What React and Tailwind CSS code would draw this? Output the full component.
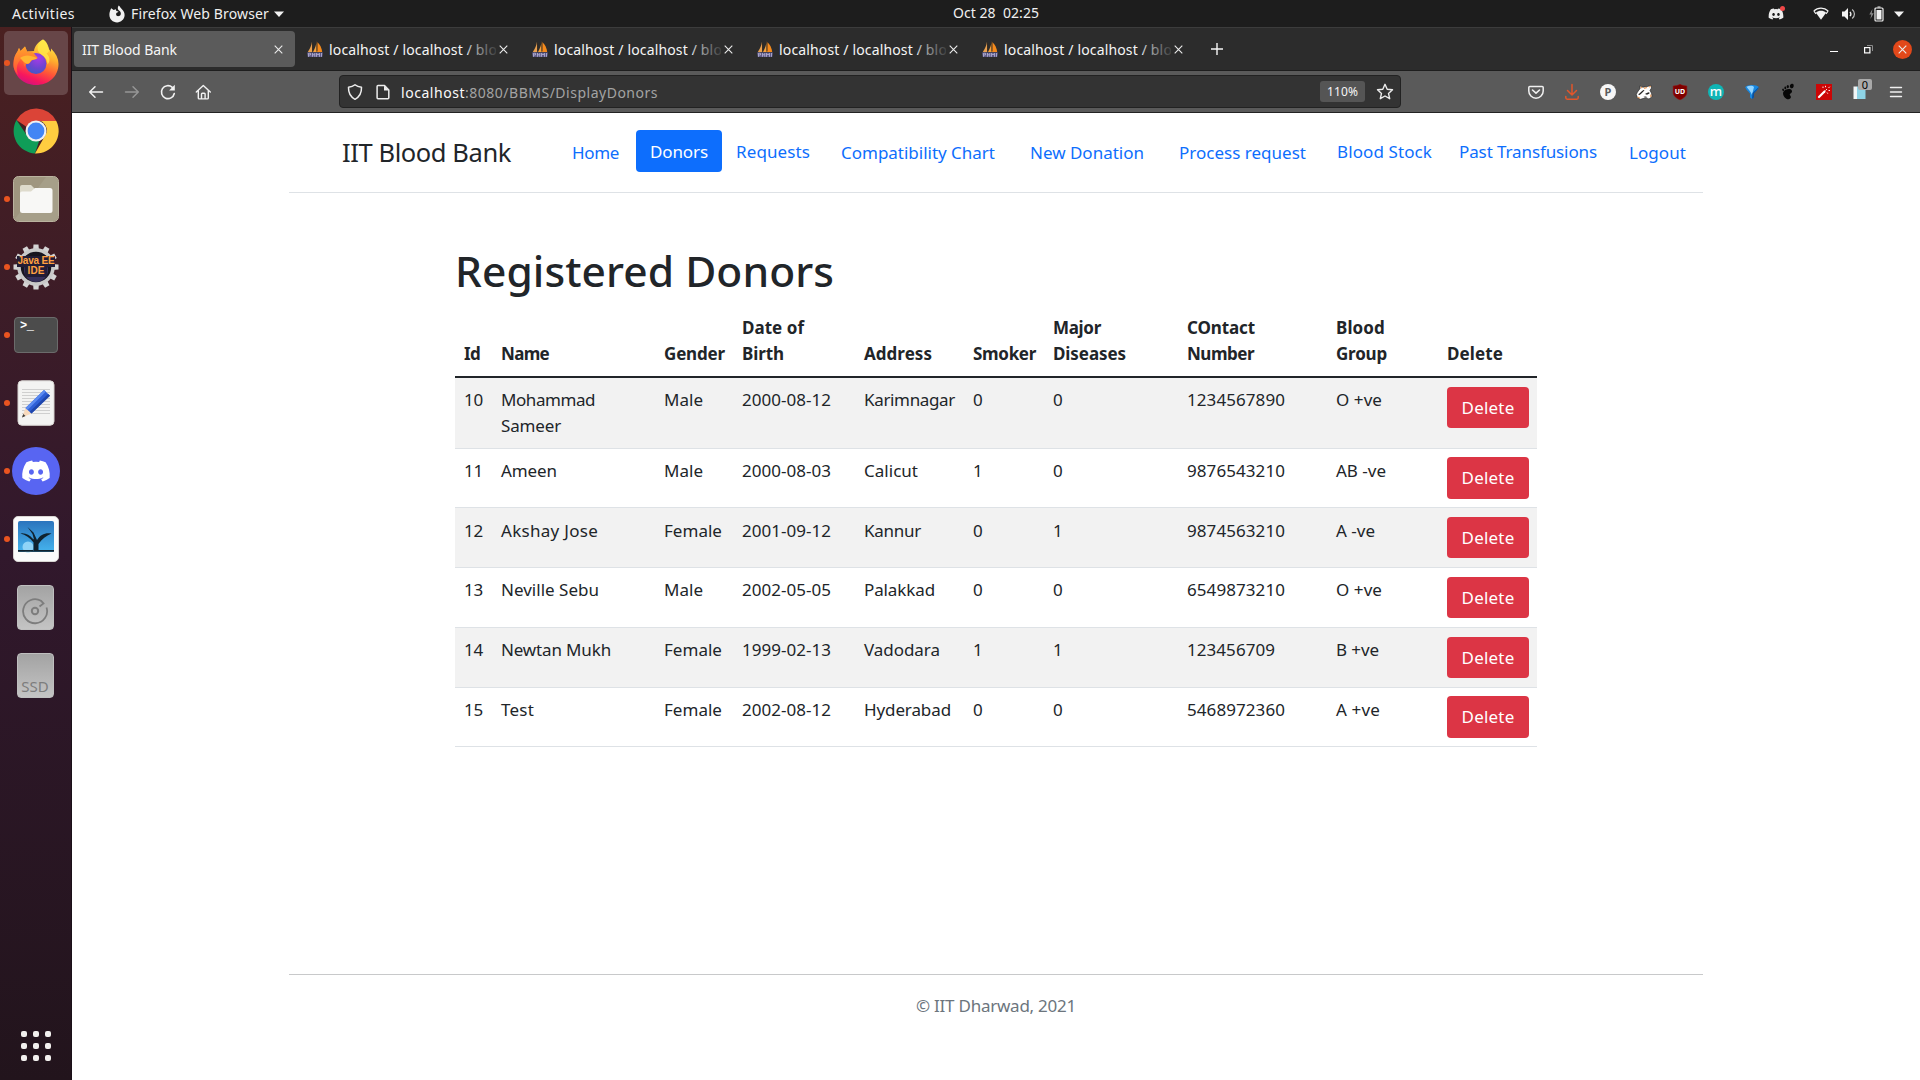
import { useLayoutEffect, useRef } from "react";
import { FaDiscord } from "react-icons/fa";

/* One line of text whose tracking is adjusted so that it fills `w` pixels. */
function Label({ w, className = "", children }) {
  const outer = useRef(null);
  const inner = useRef(null);
  useLayoutEffect(() => {
    const natural = inner.current.getBoundingClientRect().width;
    const count = inner.current.textContent.length;
    outer.current.style.width = `${w}px`;
    inner.current.style.letterSpacing = `${(w - natural) / count}px`;
  }, [w]);
  return (
    <span ref={outer} className={`block shrink-0 whitespace-pre ${className}`}>
      <span ref={inner}>{children}</span>
    </span>
  );
}

/* ---------- top bar ---------- */

function TopBar() {
  return (
    <div className="flex h-[27px] shrink-0 items-center bg-[#1d1d1d] text-[14px] leading-[26px] text-[#f0f0f0]">
      <div className="flex w-[953px] items-center pl-3">
        <Label w={63}>Activities</Label>
        <svg className="ml-[34px] h-[18px] w-4" viewBox="0 0 16 18">
          <path fill="#f2f2f2" fillRule="evenodd" d="M2.2 3.2 4.6 5 7 4.300C6.600 6 8 6.400 9.600 6.600 9 7.500 7.600 7.600 7.200 8.500 6.500 10.200 8.300 11.600 10 11.100 12.500 10.400 12.300 7 10.300 5.700 8.500 4.600 8.300 2.200 9.700.4 11.200 1.300 11.300 2.700 12.700 4 14.700 5.800 15.800 8 15.600 10.600 15.200 14.600 12 17.300 8.100 17.400 3.800 17.400.5 14.200.4 10 .3 7.200 1.200 5.400 2.200 3.200Z" />
        </svg>
        <Label w={138} className="ml-[6px]">Firefox Web Browser</Label>
        <svg className="ml-[5px] h-[6px] w-[10px]" viewBox="0 0 10 6"><path fill="#f2f2f2" d="M0 .5h10L5 6Z" /></svg>
      </div>
      <Label w={86} className="-mt-px">{"Oct 28  02:25"}</Label>
      <div className="flex flex-1 items-center justify-end pr-4">
        <div className="relative mr-[29px] h-4 w-4">
          <FaDiscord className="h-4 w-4 text-[#eeeeee]" />
          <span className="absolute -right-px top-0 h-[5px] w-[5px] rounded-full bg-[#f04747]" />
        </div>
        <svg className="h-[13px] w-4" viewBox="0 0 16 13">
          <path fill="#f2f2f2" d="M8 12.800 2.900 5.800C5.700 3.200 10.300 3.200 13.100 5.800Z" />
          <path fill="none" stroke="#f2f2f2" strokeWidth="1.200" d="M.8 4C4.800.1 11.200.1 15.200 4M3 6.800.8 4M13 6.800 15.200 4" />
        </svg>
        <svg className="ml-3 h-[14px] w-4" viewBox="0 0 16 14">
          <path fill="#f2f2f2" d="M1 4.500h2.500L7 1v12L3.500 9.500H1Z" />
          <path fill="none" stroke="#f2f2f2" strokeWidth="1.300" d="M9 4.800C10 6 10 8 9 9.200" />
          <path fill="none" stroke="#bdbdbd" strokeWidth="1.200" d="M11.200 2.500c3 2.500 3 6.500 0 9" />
        </svg>
        <svg className="ml-[12px] h-4 w-[15px]" viewBox="0 0 15 16">
          <path fill="#8a8a8a" d="M3.500 3 .3 8.600h2L1.400 13l3.300-5.700H2.700Z" />
          <path fill="#f2f2f2" d="M8.500.5h3v1h-3ZM7.500 4h5v9.500h-5Z" />
          <rect x="6" y="2" width="8" height="13" rx="1" fill="none" stroke="#f2f2f2" strokeWidth="1.200" />
        </svg>
        <svg className="ml-[10px] h-[6px] w-[10px]" viewBox="0 0 10 6"><path fill="#f2f2f2" d="M0 .5h10L5 6Z" /></svg>
      </div>
    </div>
  );
}

/* ---------- dock ---------- */

function FirefoxIcon() {
  return (
    <svg className="h-[46px] w-[46px] -translate-y-px" viewBox="0 0 46 46">
      <defs>
        <linearGradient id="ffBody" x1=".75" y1="0" x2=".35" y2="1">
          <stop offset="0" stopColor="#fff04a" />
          <stop offset=".35" stopColor="#ffb02e" />
          <stop offset=".62" stopColor="#ff5a36" />
          <stop offset=".85" stopColor="#f8175d" />
          <stop offset="1" stopColor="#d3127f" />
        </linearGradient>
        <linearGradient id="ffEar" x1="0" y1="0" x2="0" y2="1">
          <stop offset="0" stopColor="#ffa42a" />
          <stop offset="1" stopColor="#ff4a3a" />
        </linearGradient>
        <radialGradient id="ffGlobe" cx=".6" cy=".25" r=".8">
          <stop offset="0" stopColor="#a63be8" />
          <stop offset=".6" stopColor="#6b45d0" />
          <stop offset="1" stopColor="#3e5bc4" />
        </radialGradient>
      </defs>
      <path fill="url(#ffBody)" d="M30 .5c3.500 2 4.500 5.500 5.500 9.500 1 .8 1.800 1.800 2.500 3V9.500c5 5 7.500 10 7.500 15.500C45.500 37.500 35.500 46 23 46S.5 37 .5 24.500C.5 19 2.500 15 4.500 12.500L6 9l1.500 3L12 7.500l2 5 7-.5c.5-4.500 4-9 9-11.500Z" />
      <circle cx="23" cy="24.500" r="10.500" fill="url(#ffGlobe)" />
      <path fill="url(#ffEar)" d="M6 9l1.500 3L12 7.500l2.300 5.200c2.700-.4 5 .3 6.700 1.800 1.500 2.500 4 3.500 3.500 4.500-.5 1.500-5.500 1.500-6.500 3-1 1.200-.7 2.400-2.700 2.700-1.800.2-3 .3-3.300 3.300-2-2.500-2.200-6.500-.5-9.500-2 0-4 1.500-5.500 4-2.500 3.500-3 9-.5 14C.5 31 .3 27.500.5 24.500.6 19 2.500 15 4.500 12.500Z" />
      <path fill="#ffb632" d="M7 19c4-3.500 10-3.500 17 0-.5 1.500-5 1.500-6.300 3-1 1.300-.9 2.500-3.200 2.700C11 24.500 9.500 21 7 19Z" />
      <path fill="#ffe94a" fillOpacity=".8" d="M30 .5c-6 4-7 10.500-3 14 4 3 7.500 5 7.500 11 3-3 2.500-8-1-11C36 13 37 11 35.500 8 34.500 5 33 2 30 .5Z" />
    </svg>
  );
}

function ChromeIcon() {
  return (
    <svg className="h-[46px] w-[46px]" viewBox="0 0 46 46">
      <path fill="#db4437" d="M3.500 12A22.500 22.500 0 0 1 43.300 13H23a10 10 0 0 0-9.300 6Z" />
      <path fill="#0f9d58" d="M3.500 12 14.300 28a10 10 0 0 0 12 4.500L22 45.500A22.500 22.500 0 0 1 3.500 12Z" />
      <path fill="#ffcd40" d="M43.300 13A22.500 22.500 0 0 1 22 45.500l9.600-17A10 10 0 0 0 27.500 13Z" />
      <circle cx="23" cy="23" r="10.500" fill="#f1f1f1" />
      <circle cx="23" cy="23" r="8.400" fill="#4285f4" />
    </svg>
  );
}

function FilesIcon() {
  return (
    <svg className="h-[46px] w-[46px]" viewBox="0 0 46 46">
      <rect x=".5" y=".5" width="45" height="45" rx="5" fill="#9f967f" stroke="#bab39f" />
      <path fill="#a69f89" d="M33 1h7a5 5 0 0 1 5 5v34a5 5 0 0 1-5 5H6a5 5 0 0 1-4-2Z" />
      <path fill="#dedbcc" d="M7 11a2 2 0 0 1 2-2h9l4 4h15v8H7Z" />
      <path fill="#f8f8f6" d="M7 17.500a2 2 0 0 1 2-2h9l4-3.500h15a2.500 2.500 0 0 1 2.500 2.500v20A2.500 2.500 0 0 1 37 37H9.500A2.500 2.500 0 0 1 7 34.500Z" />
    </svg>
  );
}

const TEETH = [0, 30, 60, 90, 120, 150, 180, 210, 240, 270, 300, 330];

function EclipseIcon() {
  return (
    <div className="relative h-[46px] w-[46px]">
      <svg className="h-[46px] w-[46px]" viewBox="0 0 46 46">
        {TEETH.map((a) => (
          <path key={a} transform={`rotate(${a} 23 23)`} fill="#d4d4d4" d="M20 7 20.500 .5h5L26 7Z" />
        ))}
        <circle cx="23" cy="23" r="17" fill="#17151f" stroke="#c9c9c9" strokeWidth="3.500" />
        <circle cx="23" cy="26" r="12" fill="#37305a" />
        <path fill="#221d36" d="M4 12h38v11H4ZM12 23h22v10H12Z" />
      </svg>
      <div className="absolute inset-0 flex flex-col items-center pt-[12px] font-['Liberation_Sans'] text-[10px] leading-[10px] font-bold text-[#ffa040]">
        <Label w={37}>Java EE</Label>
        <Label w={17}>IDE</Label>
      </div>
    </div>
  );
}

function TerminalIcon() {
  return (
    <div className="h-[36px] w-[44px] rounded-[4px] border border-[#6b6b6b] bg-[#4c4c4c] pl-[5px] pt-[2px] font-['Liberation_Mono'] text-[12px] leading-[13px] font-bold tracking-[-0.500px] text-white">
      &gt;_
    </div>
  );
}

function EditorIcon() {
  return (
    <svg className="h-[46px] w-[38px]" viewBox="0 0 38 46">
      <rect x="1" y=".8" width="36" height="44.500" rx="4" fill="#f3f3f2" stroke="#d6d3d0" />
      <path stroke="#cfcfcf" d="M5 9.500h28M5 12.500h28M5 15.500h28M5 18.500h28M5 21.500h28M5 24.500h28M5 27.500h28M5 30.500h28M5 33.500h28" />
      <path fill="#f7d9bd" d="m5 37.500 3.500-9.500 6 5.500Z" />
      <path fill="#3b3b3b" d="m5 37.500 1.200-3.600 2.300 2.100Z" />
      <path fill="#2f5fd6" d="M8.500 28 27 10l6 5.800-18.500 17.700Z" />
      <path fill="#5b8af0" d="M8.500 28 27 10l1.800 1.800L10.500 30Z" />
      <path fill="#1f46ac" d="m12.700 31.800 18.400-17.800 1.900 1.800-18.500 17.700Z" />
    </svg>
  );
}

function DiscordIcon() {
  return (
    <div className="flex h-12 w-12 items-center justify-center rounded-full bg-[#5865f2]">
      <FaDiscord className="h-[30px] w-[30px] text-white" />
    </div>
  );
}

function PhotoIcon() {
  return (
    <svg className="h-[46px] w-[46px]" viewBox="0 0 46 46">
      <defs>
        <linearGradient id="sky" x1="0" y1="0" x2="0" y2="1">
          <stop offset="0" stopColor="#2b74bd" />
          <stop offset="1" stopColor="#45b4ee" />
        </linearGradient>
      </defs>
      <rect x=".5" y=".5" width="45" height="45" rx="4.500" fill="#fbfbfb" stroke="#d8d5d2" />
      <rect x="5" y="5" width="36" height="31" rx="2" fill="url(#sky)" />
      <circle cx="15" cy="31" r="5.500" fill="#8fd4f7" />
      <path fill="#10222e" d="M20.500 35V26.500C17 22 12.500 18.500 7.500 17.500c5-.8 9 1.500 12 5l1.500 1L19.500 18l-5-7 6 5.500 3.500 7.500C27.500 18.500 32 16.500 38.500 17.500 33 20 29 23 25.500 28v6H41v1.800H5V34h15Z" />
    </svg>
  );
}

function DriveIcon({ children }) {
  return (
    <div className="flex h-[45px] w-[37px] -translate-x-px items-end justify-center rounded-[4px] border border-[#bfbfbf] bg-linear-to-b from-[#a3a3a3] to-[#c4c4c4]">
      {children}
    </div>
  );
}

const DOCK = [
  { icon: <FirefoxIcon />, active: true, running: true },
  { icon: <ChromeIcon /> },
  { icon: <FilesIcon />, running: true },
  { icon: <EclipseIcon />, running: true },
  { icon: <TerminalIcon />, running: true },
  { icon: <EditorIcon />, running: true },
  { icon: <DiscordIcon />, running: true },
  { icon: <PhotoIcon />, running: true },
  {
    icon: (
      <DriveIcon>
        <svg className="mb-1 h-7 w-7" viewBox="0 0 28 28" fill="none" stroke="#7d7d7d" strokeWidth="1.800">
          <path d="M25.500 10.500A12 12 0 1 1 20 3.800l2.500 2.700-4 3" />
          <circle cx="14" cy="14" r="3.200" strokeWidth="2" />
        </svg>
      </DriveIcon>
    ),
  },
  { icon: <DriveIcon><span className="text-[15px] leading-[22px] text-[#7d7d7d]">SSD</span></DriveIcon> },
];

function Dock() {
  return (
    <div className="flex w-[72px] shrink-0 flex-col justify-between border-r border-[#1a1018] bg-linear-to-b from-[#4a2020] via-[#31182c] to-[#22141c] pt-[4px] pb-[19px]">
      <div className="flex flex-col gap-1">
        {DOCK.map(({ icon, active, running }, i) => (
          <div key={i} className={`relative ml-1 flex h-16 w-16 items-center justify-center rounded-[5px] ${active ? "bg-[#674648]" : ""}`}>
            {running && <span className="absolute left-0 top-[29px] h-[6px] w-[6px] rounded-full bg-[#e95420]" />}
            {icon}
          </div>
        ))}
      </div>
      <div className="ml-[21px] grid w-[30px] grid-cols-3 gap-[6px]">
        {Array.from({ length: 9 }, (_, i) => (
          <span key={i} className="h-[6px] w-[6px] rounded-[2px] bg-[#f2f0ee]" />
        ))}
      </div>
    </div>
  );
}

/* ---------- browser chrome ---------- */

function Cross() {
  return (
    <svg className="h-[9px] w-[9px]" viewBox="0 0 9 9"><path stroke="#ececec" strokeWidth="1.100" d="m.7.7 7.600 7.600m0-7.600-7.600 7.600" /></svg>
  );
}

function SailsIcon() {
  return (
    <svg className="h-4 w-4" viewBox="0 0 16 16">
      <path fill="#e8a050" d="M5 .8 5.200 11H.8C3 7.500 4.500 4.500 5 .8Z" />
      <path fill="#f5a13a" d="M9.600 0v11H6C8 7 9.500 4 9.600 0Z" />
      <path fill="#f48a1c" d="M10.200 1c2.800 2.500 4.500 5.500 5 10h-5Z" />
      <path stroke="#3a2a1a" strokeWidth=".7" d="M5.600 2v8M10 1v9" />
      <path fill="#5c5885" d="M0 11.500h16l-.8 4.500H.8Z" />
      <path fill="none" stroke="#aeabcf" strokeWidth=".9" d="M1.500 15.800v-3.600h2v1.800h-2M5.500 12v3.800m0-2h2.300m0-1.800v3.800M9.500 15.800v-3.600l1.500 1.800 1.500-1.800v3.600M14.500 12v3.800" />
    </svg>
  );
}

function TabStrip() {
  return (
    <div className="flex h-[44px] shrink-0 items-start border-t border-b border-t-[#3c3c3c] border-b-[#1e1e1e] bg-[#2c2c2c] pt-[3px] pl-[2px] text-[14px] leading-[36px] text-[#f5f5f5]">
      <div className="flex gap-1">
        <div className="flex h-[36px] w-[221px] items-center justify-between rounded-[4px] bg-[#5b5b5b] pr-[12px] pl-2">
          <Label w={95} className="mt-[2px]">IIT Blood Bank</Label>
          <Cross />
        </div>
        {[0, 1, 2, 3].map((i) => (
          <div key={i} className="flex h-[36px] w-[221px] items-center pl-2">
            <SailsIcon />
            <div className="relative ml-[6px] mt-[2px] w-[167px] overflow-hidden">
              <Label w={168}>localhost / localhost / blo</Label>
              <span className="absolute inset-y-0 right-0 w-[28px] bg-linear-to-r from-[#2c2c2c]/20 to-[#2c2c2c]/90" />
            </div>
            <span className="ml-[3px]"><Cross /></span>
          </div>
        ))}
      </div>
      <svg className="mt-[12px] ml-[16px] h-3 w-3" viewBox="0 0 12 12"><path stroke="#f5f5f5" strokeWidth="1.400" d="M6 0v12M0 6h12" /></svg>
      <div className="ml-auto flex h-[36px] items-center pr-2">
        <span className="mt-[5px] h-px w-2 bg-white" />
        <svg className="ml-[26px] h-[9px] w-[9px]" viewBox="0 0 9 9" fill="none">
          <path stroke="#8b8b8b" d="M3 .5h5.500V6" />
          <rect x=".6" y="2.600" width="5.300" height="5.300" stroke="#fff" strokeWidth="1.200" />
        </svg>
        <span className="ml-[20px] flex h-[19px] w-[19px] items-center justify-center rounded-full bg-[#e2481a]"><Cross /></span>
      </div>
    </div>
  );
}

function Ico({ children }) {
  return <svg className="h-5 w-5 shrink-0" viewBox="0 0 20 20" fill="none">{children}</svg>;
}

function Extensions() {
  return (
    <div className="ml-auto flex items-center gap-4 pr-[14px]">
      <Ico>
        <path stroke="#f0f0f0" strokeWidth="1.500" strokeLinejoin="round" d="M3.800 4.500h12.400a1 1 0 0 1 1 1V9a7.200 7.200 0 0 1-14.400 0V5.500a1 1 0 0 1 1-1Z" />
        <path stroke="#f0f0f0" strokeWidth="1.600" strokeLinecap="round" strokeLinejoin="round" d="m6.500 8 3.500 3.200L13.500 8" />
      </Ico>
      <Ico>
        <path stroke="#e2562a" strokeWidth="1.500" strokeLinecap="round" strokeLinejoin="round" d="M10 2.500v10.500M5.500 8.500 10 13l4.500-4.500M3.800 14.500v1.300c0 .8.500 1.400 1.400 1.400h9.600c.9 0 1.400-.6 1.400-1.400v-1.300" />
      </Ico>
      <span className="flex h-5 w-5 items-center justify-center"><span className="flex h-4 w-4 items-center justify-center rounded-full bg-[#f6f6f6] text-[11px] leading-4 font-bold text-[#5b5b5b]">P</span></span>
      <Ico>
        <path fill="#fdfdfd" stroke="#2a2a2a" strokeWidth=".7" strokeLinejoin="round" d="M2.300 12.500C3.500 9.500 5 8 6 6.800L6 3.800 8.800 5.200 13.500 4.500 17 3.200 17.500 6 16 8.500C17.500 10.500 18 12.500 17.800 15L15 17 11 16 6.500 17.300 3.500 16Z" />
        <path fill="#222" d="M4 12.300C6 11.500 7.500 9.300 9.500 8L10.500 8.600C9 9.800 7.500 12 5.500 13ZM11 12C12 11.500 13.500 10.500 15.200 10.300L15.500 11.500 13 12.800ZM9.500 14.800 12 14.500 13.500 15.500 11 15.500Z" />
        <path stroke="#ea9d5e" strokeWidth="1.200" d="M6.800 4.800 8 6M15 5l1.800-.8M3.500 15l2.500 1.300M10 6.300l3-.8M16.800 12.500v2.500" />
      </Ico>
      <div className="relative h-5 w-5">
        <Ico><path fill="#800000" stroke="#990d0d" strokeWidth=".5" d="M10 2.300c2.200 1.300 4.300 1.700 6.800 1.700v6.500c0 3.300-2.800 5.600-6.800 7.300-4-1.700-6.800-4-6.800-7.300V4C5.700 4 7.800 3.600 10 2.300Z" /></Ico>
        <span className="absolute inset-0 text-center text-[7px] leading-[19px] font-bold text-white">UD</span>
      </div>
      <span className="flex h-5 w-5 items-center justify-center"><span className="flex h-4 w-4 items-center justify-center rounded-full bg-[#0fb5b5] pb-[2px] text-[13px] leading-[14px] font-medium text-white">m</span></span>
      <Ico>
        <path fill="#1787e0" d="M3.300 5C5 2.300 15 2.300 16.700 5c.3 1.500-3 4.500-4.700 6.500v4L10 17l-2-1.500v-4C6.300 9.500 3 6.500 3.300 5Z" />
        <path fill="#8fd3ff" d="M4.500 4.800C7 3.300 11 3.300 12 5l-2 8C8.500 9.500 6.500 7.500 4.500 4.800Z" />
        <path fill="#0a4f9d" d="M16.700 5c.3 1.500-3 4.500-4.700 6.500v4L10 17l.5-6Z" />
      </Ico>
      <Ico>
        <g fill="#070707">
          <ellipse cx="13.800" cy="4" rx="1.900" ry="2.300" transform="rotate(20 13.800 4)" />
          <ellipse cx="9.800" cy="4.600" rx="1.100" ry="1.700" />
          <ellipse cx="7.300" cy="5.900" rx=".95" ry="1.400" />
          <ellipse cx="5.100" cy="7.800" rx=".9" ry="1.200" transform="rotate(-20 5 7.800)" />
          <path d="M13.500 8c1.500 2-.6 3-1.600 4.300-.8 1 1 1 1 2.800 0 1.600-1.800 2.700-3.500 2.100C6.500 16.200 4.300 12.700 5.300 10 6.500 7.300 11.900 6 13.500 8Z" />
        </g>
      </Ico>
      <Ico>
        <rect x="2" y="2" width="16" height="16" fill="#cc0606" />
        <path stroke="#fff" strokeWidth="2.200" strokeLinecap="round" d="m5 15 5.500-5.500" />
        <path stroke="#fff" strokeWidth=".9" d="m11.500 8.500 1.500-1.500M9 6V4.500M11.500 5.200V3.800M14.500 6 15.800 4.700M14.500 8.500H16M13 10.500l.8 1.200" />
      </Ico>
      <div className="relative h-5 w-5">
        <Ico><path fill="#f2f6f7" d="M3.500 4.500H7v12.500H3.500Z" /><path fill="#8ed4e6" d="M7 4.500h8.500v12.500H7Z" /></Ico>
        <span className="absolute -top-[3px] left-[8px] h-[11px] w-[14px] rounded-[2px] bg-[#a9a9a9] text-center text-[11px] leading-[11px] text-black">0</span>
      </div>
      <Ico><path stroke="#f0f0f0" strokeWidth="1.400" strokeLinecap="round" d="M4.500 5.500h11M4.500 10h11M4.500 14.500h11" /></Ico>
    </div>
  );
}

function Toolbar() {
  return (
    <div className="flex h-[42px] shrink-0 items-center border-b border-[#222] bg-[#5a5a5a] pl-[14px]">
      <div className="mt-px flex gap-4">
        <Ico><path stroke="#f2f2f2" strokeWidth="1.500" strokeLinecap="round" strokeLinejoin="round" d="M16.500 10H3.700M9 4.700 3.700 10 9 15.300" /></Ico>
        <Ico><path stroke="#969696" strokeWidth="1.500" strokeLinecap="round" strokeLinejoin="round" d="M3.500 10h12.800M11 4.700l5.300 5.300-5.300 5.300" /></Ico>
        <Ico>
          <path stroke="#f2f2f2" strokeWidth="1.600" strokeLinecap="round" d="M16.300 11.500A6.500 6.500 0 1 1 14.300 5.300" />
          <path fill="#f2f2f2" d="M16.800 2.800v5.700h-5.700Z" />
        </Ico>
        <Ico>
          <path stroke="#f2f2f2" strokeWidth="1.400" strokeLinejoin="round" strokeLinecap="round" d="m2.300 10 7-6.500 7 6.500M4.300 8.500V16a.9.900 0 0 0 .9.900h8.200a.9.900 0 0 0 .9-.9V8.500M7.500 16.500V12a.8.800 0 0 1 .8-.8h2a.8.800 0 0 1 .8.800v4.500" />
        </Ico>
      </div>
      <div className="ml-[125px] flex h-[33px] w-[1062px] items-center rounded-[4px] border border-[#222] bg-[#333] pr-[5px] pl-[5px]">
        <Ico><path stroke="#ededed" strokeWidth="1.500" strokeLinejoin="round" d="M10 2.800c2 1.700 4.300 2.300 6.500 2.500.2 5.200-1.500 9.300-6.500 12-5-2.700-6.700-6.800-6.500-12 2.200-.2 4.500-.8 6.500-2.500Z" /></Ico>
        <span className="ml-2"><Ico>
          <path stroke="#ededed" strokeWidth="1.500" strokeLinejoin="round" d="M5 3.500h6.500L15.800 8v7.800a.9.900 0 0 1-.9.900H5a.9.900 0 0 1-.9-.9V4.400a.9.900 0 0 1 .9-.9Z" />
          <path fill="#ededed" d="M11 3.500V8.500h5Z" />
        </Ico></span>
        <div className="mt-[2px] ml-2 flex text-[14px] leading-7">
          <Label w={64} className="text-[#fafafa]">localhost</Label>
          <Label w={193} className="text-[#a3a3a3]">:8080/BBMS/DisplayDonors</Label>
        </div>
        <div className="ml-auto flex h-[21px] w-[45px] items-center justify-center rounded-[3px] bg-[#555] text-[12px] leading-5 text-[#f5f5f5]">
          <Label w={31}>110%</Label>
        </div>
        <span className="ml-[10px]"><Ico><path stroke="#ededed" strokeWidth="1.400" strokeLinejoin="round" d="m10 2.300 2.200 4.900 5.300.6-4 3.600 1.200 5.300L10 14l-4.700 2.700 1.200-5.300-4-3.600 5.300-.6Z" /></Ico></span>
      </div>
      <Extensions />
    </div>
  );
}

/* ---------- page ---------- */

function SiteHeader() {
  return (
    <div className="flex h-[80px] items-start border-b border-[#dee2e6] pt-[17px] pl-[53px] text-[17px] leading-[42px] text-[#0d6efd]">
      <Label w={169} className="mt-px text-[25.500px] leading-[42px] text-[#212529]">IIT Blood Bank</Label>
      <Label w={47} className="mt-[2px] ml-[61px]">Home</Label>
      <div className="ml-[17px] flex h-[42px] w-[86px] justify-center rounded-[4px] bg-[#0d6efd] text-white">
        <Label w={58} className="mt-px">Donors</Label>
      </div>
      <Label w={74} className="mt-px ml-[14px]">Requests</Label>
      <Label w={154} className="mt-[2px] ml-[31px]">Compatibility Chart</Label>
      <Label w={114} className="mt-[2px] ml-[35px]">New Donation</Label>
      <Label w={127} className="mt-[2px] ml-[35px]">Process request</Label>
      <Label w={95} className="mt-px ml-[31px]">Blood Stock</Label>
      <Label w={138} className="mt-px ml-[27px]">Past Transfusions</Label>
      <Label w={57} className="mt-[2px] ml-[32px]">Logout</Label>
    </div>
  );
}

const HEADERS = [
  [["Id", 16]],
  [["Name", 48]],
  [["Gender", 61]],
  [["Date of", 62], ["Birth", 42]],
  [["Address", 68]],
  [["Smoker", 63]],
  [["Major", 48], ["Diseases", 73]],
  [["COntact", 68], ["Number", 67]],
  [["Blood", 49], ["Group", 51]],
  [["Delete", 56]],
];

const DONORS = [
  { h: "h-[71px]", top: "pt-[9px]", pad: "pt-[9px]", btn: "h-[41px]", cells: [[["10", 19]], [["Mohammad", 94], ["Sameer", 60]], [["Male", 39]], [["2000-08-12", 89]], [["Karimnagar", 91]], [["0", 10]], [["0", 10]], [["1234567890", 98]], [["O +ve", 46]]] },
  { h: "h-[59px]", top: "pt-[9px]", pad: "pt-[8px]", btn: "h-[42px]", cells: [[["11", 19]], [["Ameen", 56]], [["Male", 39]], [["2000-08-03", 89]], [["Calicut", 54]], [["1", 10]], [["0", 10]], [["9876543210", 98]], [["AB -ve", 50]]] },
  { h: "h-[60px]", top: "pt-[10px]", pad: "pt-[9px]", btn: "h-[41px]", cells: [[["12", 19]], [["Akshay Jose", 97]], [["Female", 58]], [["2001-09-12", 89]], [["Kannur", 57]], [["0", 10]], [["1", 10]], [["9874563210", 98]], [["A -ve", 39]]] },
  { h: "h-[60px]", top: "pt-[9px]", pad: "pt-[9px]", btn: "h-[41px]", cells: [[["13", 19]], [["Neville Sebu", 98]], [["Male", 39]], [["2002-05-05", 89]], [["Palakkad", 71]], [["0", 10]], [["0", 10]], [["6549873210", 98]], [["O +ve", 46]]] },
  { h: "h-[60px]", top: "pt-[9px]", pad: "pt-[9px]", btn: "h-[41px]", cells: [[["14", 19]], [["Newtan Mukh", 110]], [["Female", 58]], [["1999-02-13", 89]], [["Vadodara", 76]], [["1", 10]], [["1", 10]], [["123456709", 88]], [["B +ve", 43]]] },
  { h: "h-[59px]", top: "pt-[9px]", pad: "pt-[8px]", btn: "h-[42px]", cells: [[["15", 19]], [["Test", 33]], [["Female", 58]], [["2002-08-12", 89]], [["Hyderabad", 87]], [["0", 10]], [["0", 10]], [["5468972360", 98]], [["A +ve", 44]]] },
];

const COLS = "grid grid-cols-[37px_163px_78px_122px_109px_80px_134px_149px_111px_99px]";

function Lines({ lines }) {
  return lines.map(([text, w]) => <Label key={text} w={w}>{text}</Label>);
}

function DonorTable() {
  return (
    <div className="w-[1082px] text-[17px] leading-[26px] text-[#212529]">
      <div className={`${COLS} items-end border-b-2 border-[#212529] pb-[9px] font-bold`}>
        {HEADERS.map((lines, i) => (
          <div key={i} className="pl-[9px]"><Lines lines={lines} /></div>
        ))}
      </div>
      {DONORS.map((row, r) => (
        <div key={r} className={`${COLS} ${row.h} border-b border-[#dee2e6] ${r % 2 === 0 ? "bg-[#f2f2f2]" : "bg-white"}`}>
          {row.cells.map((lines, i) => (
            <div key={i} className={`pl-[9px] ${row.top}`}><Lines lines={lines} /></div>
          ))}
          <div className={`pl-[9px] ${row.pad}`}>
            <button className={`flex w-[82px] items-center justify-center rounded-[4px] bg-[#dc3545] text-white ${row.btn}`}>
              <Label w={53}>Delete</Label>
            </button>
          </div>
        </div>
      ))}
    </div>
  );
}

function Page() {
  return (
    <div className="flex-1 bg-white pl-[217px]">
      <div className="w-[1414px]">
        <SiteHeader />
        <main className="pt-[52px] pl-[166px]">
          <h1 className="mb-[18px] text-[42.500px] leading-[52px] font-medium text-[#212529]">
            <Label w={379}>Registered Donors</Label>
          </h1>
          <DonorTable />
        </main>
        <footer className="mt-[227px] flex justify-center border-t border-[#c8c9ca] pt-[18px] text-[17px] leading-[26px] text-[#6c757d]">
          <Label w={160}>© IIT Dharwad, 2021</Label>
        </footer>
      </div>
    </div>
  );
}

export default function App() {
  return (
    <div className="flex h-[1080px] w-[1920px] flex-col overflow-hidden bg-white font-['Noto_Sans',sans-serif]">
      <TopBar />
      <div className="flex min-h-0 flex-1">
        <Dock />
        <div className="flex min-w-0 flex-1 flex-col">
          <TabStrip />
          <Toolbar />
          <Page />
        </div>
      </div>
    </div>
  );
}
